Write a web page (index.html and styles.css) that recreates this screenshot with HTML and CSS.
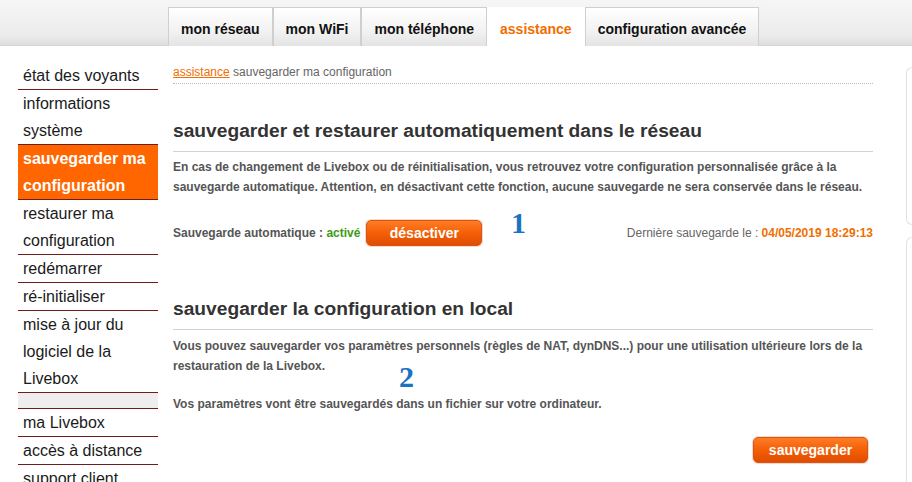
FILE: index.html
```html
<!DOCTYPE html>
<html lang="fr">
<head>
<meta charset="utf-8">
<title>assistance - sauvegarder ma configuration</title>
<link rel="stylesheet" href="styles.css">
</head>
<body>
<header class="topbar">
  <nav class="tabs">
    <a class="tab">mon réseau</a>
    <a class="tab">mon WiFi</a>
    <a class="tab">mon téléphone</a>
    <a class="tab tab-active">assistance</a>
    <a class="tab">configuration avancée</a>
  </nav>
</header>
<div class="page">
  <aside class="sidebar">
    <a class="side-item">état des voyants</a>
    <a class="side-item">informations système</a>
    <a class="side-item side-active">sauvegarder ma configuration</a>
    <a class="side-item">restaurer ma configuration</a>
    <a class="side-item">redémarrer</a>
    <a class="side-item">ré-initialiser</a>
    <a class="side-item">mise à jour du logiciel de la Livebox</a>
    <div class="side-sep"></div>
    <a class="side-item">ma Livebox</a>
    <a class="side-item">accès à distance</a>
    <a class="side-item">support client</a>
  </aside>
  <main class="main">
    <div class="crumb"><a class="crumb-link">assistance</a> sauvegarder ma configuration</div>
    <h2 class="title title-first">sauvegarder et restaurer automatiquement dans le réseau</h2>
    <p class="text">En cas de changement de Livebox ou de réinitialisation, vous retrouvez votre configuration personnalisée grâce à la sauvegarde automatique. Attention, en désactivant cette fonction, aucune sauvegarde ne sera conservée dans le réseau.</p>
    <div class="status-row">
      <span class="status-label">Sauvegarde automatique : <span class="green">activé</span></span>
      <button class="btn btn-deact">désactiver</button>
      <span class="marker marker-1">1</span>
      <span class="last">Dernière sauvegarde le : <b class="date">04/05/2019 18:29:13</b></span>
    </div>
    <h2 class="title title-second">sauvegarder la configuration en local</h2>
    <div class="local">
      <p class="text">Vous pouvez sauvegarder vos paramètres personnels (règles de NAT, dynDNS...) pour une utilisation ultérieure lors de la restauration de la Livebox.</p>
      <span class="marker marker-2">2</span>
      <p class="text text-file">Vos paramètres vont être sauvegardés dans un fichier sur votre ordinateur.</p>
    </div>
    <div class="actions">
      <button class="btn btn-save">sauvegarder</button>
    </div>
  </main>
  <div class="rightcol">
    <div class="panel panel-a"></div>
    <div class="panel panel-b"></div>
  </div>
</div>
</body>
</html>
```
FILE: styles.css
```css
* { box-sizing: border-box; }
html, body { margin: 0; padding: 0; }
body {
  background: #fff;
  font-family: "Liberation Sans", Arial, sans-serif;
  color: #222;
  width: 912px;
  height: 482px;
  overflow: hidden;
}
.topbar {
  height: 46px;
  background: linear-gradient(#f6f6f6, #ebebeb 80%, #dedede);
  border-bottom: 1px solid #d6d6d6;
  padding-left: 168px;
  padding-top: 7px;
}
.tabs { display: flex; height: 39px; }
.tab {
  display: flex;
  align-items: center;
  padding: 3px 12px 0;
  height: 39px;
  border: 1px solid #cfcfcf;
  border-bottom: none;
  background: linear-gradient(#ffffff, #f2f2f2 60%, #e4e4e4);
  font-weight: bold;
  font-size: 14px;
  color: #111;
  flex-shrink: 0;
}
.tab-active {
  background: #fff;
  border-color: #fff;
  color: #f16e00;
  height: 40px;
}
.page { display: flex; }
.sidebar {
  flex: 0 0 140px;
  width: 140px;
  margin-left: 18px;
  margin-top: 16px;
  display: flex;
  flex-direction: column;
}
.side-item {
  display: block;
  padding-left: 5px;
  font-size: 16px;
  line-height: 27px;
  color: #1a1a1a;
  border-bottom: 1px solid #6e1c1c;
}
.side-active {
  background: #ff6600;
  color: #fff;
  font-weight: bold;
}
.side-sep {
  height: 16px;
  background: #eeeeee;
  border-bottom: 1px solid #6e1c1c;
}
.main {
  flex: 0 0 700px;
  width: 700px;
  margin-left: 15px;
  margin-top: 16px;
  position: relative;
}
.crumb {
  font-size: 12px;
  line-height: 20px;
  padding-bottom: 1px;
  color: #666;
  border-bottom: 1px dotted #bbb;
}
.crumb-link { color: #f16e00; text-decoration: underline; }
.title {
  margin: 0;
  font-size: 19.2px;
  line-height: 24px;
  color: #333;
  padding-bottom: 8px;
  border-bottom: 1px solid #d2d2d2;
}
.title-first { margin-top: 35px; }
.title-second { margin-top: 51px; }
.text {
  margin: 5px 0 0;
  font-size: 12px;
  font-weight: bold;
  line-height: 20px;
  color: #555;
}
.status-row {
  display: flex;
  align-items: center;
  margin-top: 23px;
  height: 26px;
  position: relative;
}
.status-label {
  font-size: 12px;
  font-weight: bold;
  color: #555;
}
.green { color: #3c9a14; }
.btn {
  height: 26px;
  border: 1px solid #d9531a;
  border-radius: 5px;
  background: linear-gradient(#ff7d24, #f45f07 50%, #e04c00);
  box-shadow: 0 0 0 1px #f4d9c8;
  color: #fff;
  font-family: "Liberation Sans", Arial, sans-serif;
  font-weight: bold;
  font-size: 14px;
  padding: 0;
}
.btn-deact { width: 116px; margin-left: 6px; }
.btn-save { width: 115px; }
.marker {
  position: absolute;
  font-family: "Liberation Serif", "Times New Roman", serif;
  font-weight: bold;
  font-size: 30px;
  line-height: 22px;
  color: #1b72c2;
}
.marker-1 { left: 338px; top: -8px; }
.marker-2 { left: 226px; top: 30px; }
.last {
  margin-left: auto;
  font-size: 12px;
  color: #666;
}
.date { color: #f16e00; }
.local { position: relative; }
.local .text { margin-top: 6px; }
.local .text-file { margin-top: 18px; }
.actions {
  display: flex;
  justify-content: flex-end;
  padding-right: 5px;
  margin-top: 23px;
}
.rightcol {
  flex: 1 1 auto;
  min-width: 0;
  margin-left: 33px;
  margin-top: 21px;
  display: flex;
  flex-direction: column;
  gap: 12px;
}
.panel {
  border: 1px solid #e2e2e2;
  border-right: none;
  border-radius: 6px 0 0 6px;
  background: #fff;
}
.panel-a { height: 158px; }
.panel-b { height: 260px; }
```
